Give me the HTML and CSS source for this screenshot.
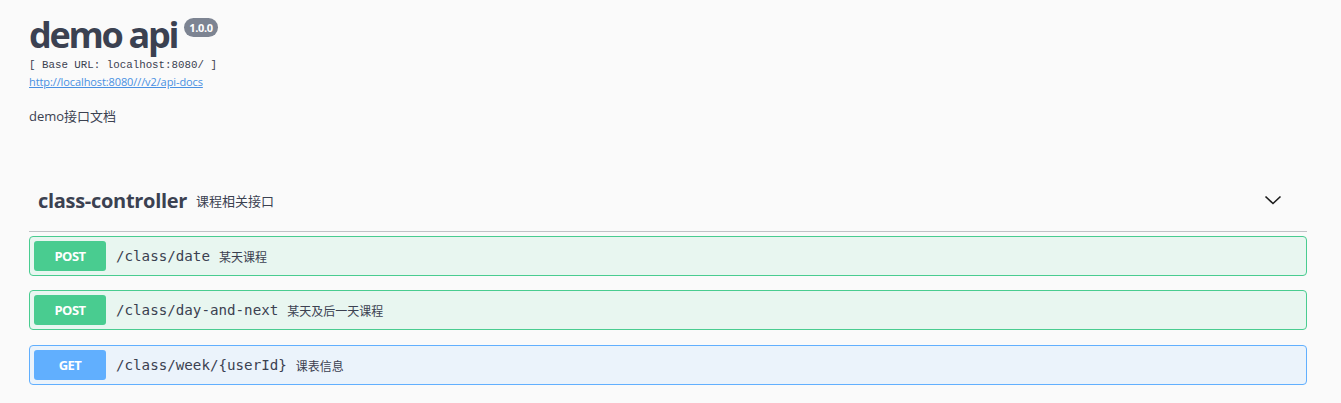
FILE: index.html
```html
<!DOCTYPE html>
<html lang="zh">
<head>
<meta charset="utf-8">
<title>demo api</title>
<link rel="stylesheet" href="styles.css">
</head>
<body>
<div class="wrapper">
  <section class="info">
    <h1 class="title">demo api<span class="version">1.0.0</span></h1>
    <div class="base-url">[ Base URL: localhost:8080/ ]</div>
    <a class="spec-link" href="#">http://localhost:8080///v2/api-docs</a>
    <p class="desc">demo接口文档</p>
  </section>

  <section class="tag">
    <div class="tag-header">
      <h3 class="tag-name">class-controller<small>课程相关接口</small></h3>
      <svg class="chevron" width="20" height="20" viewBox="0 0 20 20"><polyline points="2.5,6.5 10,13.5 17.5,6.5" fill="none" stroke="#1b1b1b" stroke-width="1.6"/></svg>
    </div>
    <div class="ops">
      <div class="op op-post">
        <span class="method">POST</span>
        <span class="path">/class/date</span>
        <span class="summary">某天课程</span>
      </div>
      <div class="op op-post">
        <span class="method">POST</span>
        <span class="path">/class/day-and-next</span>
        <span class="summary">某天及后一天课程</span>
      </div>
      <div class="op op-get">
        <span class="method">GET</span>
        <span class="path">/class/week/{userId}</span>
        <span class="summary">课表信息</span>
      </div>
    </div>
  </section>
</div>
</body>
</html>
```

FILE: styles.css
```css
html, body {
  margin: 0;
  padding: 0;
  background: #fafafa;
  color: #3b4151;
  font-family: "Open Sans", "Noto Sans CJK SC", sans-serif;
}
.wrapper {
  padding: 0 34px 0 29px;
}
.info {
  padding-top: 16px;
}
.title {
  margin: 0;
  font-size: 36px;
  line-height: 38px;
  font-weight: 700;
  letter-spacing: -2.3px;
  color: #3b4151;
  display: flex;
  align-items: flex-start;
}
.version {
  display: inline-block;
  margin-left: 7px;
  margin-top: 2px;
  padding: 0 5px;
  height: 19px;
  line-height: 19px;
  border-radius: 10px;
  background: #7d8492;
  color: #fff;
  font-size: 11px;
  letter-spacing: -0.3px;
  font-weight: 700;
}
.base-url {
  margin-top: 4px;
  font-family: "Liberation Mono", monospace;
  font-size: 10.8px;
  line-height: 14px;
  color: #3b4151;
}
.spec-link {
  display: block;
  margin-top: 2px;
  font-size: 11px;
  line-height: 15px;
  letter-spacing: -0.1px;
  color: #4990e2;
  text-decoration: underline;
}
.desc {
  margin: 18px 0 0;
  font-size: 13px;
  line-height: 18px;
}
.tag {
  margin-top: 58px;
}
.tag-header {
  display: flex;
  align-items: center;
  justify-content: space-between;
  box-sizing: border-box;
  height: 49px;
  padding: 0 24px 14px 9px;
  border-bottom: 1px solid rgba(59, 65, 81, 0.3);
}
.tag-name {
  margin: 0;
  font-size: 20px;
  font-weight: 700;
  letter-spacing: -0.3px;
  display: flex;
  align-items: center;
}
.tag-name small {
  font-size: 13px;
  font-weight: 400;
  letter-spacing: 0;
  margin-left: 9px;
  font-family: "Noto Sans CJK SC", sans-serif;
}
.ops {
  padding-top: 4px;
  display: flex;
  flex-direction: column;
}
.op {
  display: flex;
  align-items: center;
  height: 40px;
  box-sizing: border-box;
  padding: 0 4px;
  border-radius: 4px;
  margin-bottom: 14px;
}
.op + .op + .op {
  margin-top: 1px;
}
.op-post {
  border: 1px solid #49cc90;
  background: #e8f6f0;
}
.op-get {
  border: 1px solid #61affe;
  background: #ebf3fb;
}
.method {
  width: 72px;
  height: 30px;
  line-height: 30px;
  text-align: center;
  border-radius: 3px;
  color: #fff;
  font-size: 13px;
  font-weight: 700;
  letter-spacing: -0.5px;
}
.op-post .method { background: #49cc90; }
.op-get .method { background: #61affe; }
.path {
  margin-left: 10px;
  font-family: "DejaVu Sans Mono", monospace;
  font-size: 14.2px;
  color: #3b4151;
}
.summary {
  margin-left: 9px;
  font-size: 12px;
  font-family: "Noto Sans CJK SC", sans-serif;
  color: #3b4151;
}
```
